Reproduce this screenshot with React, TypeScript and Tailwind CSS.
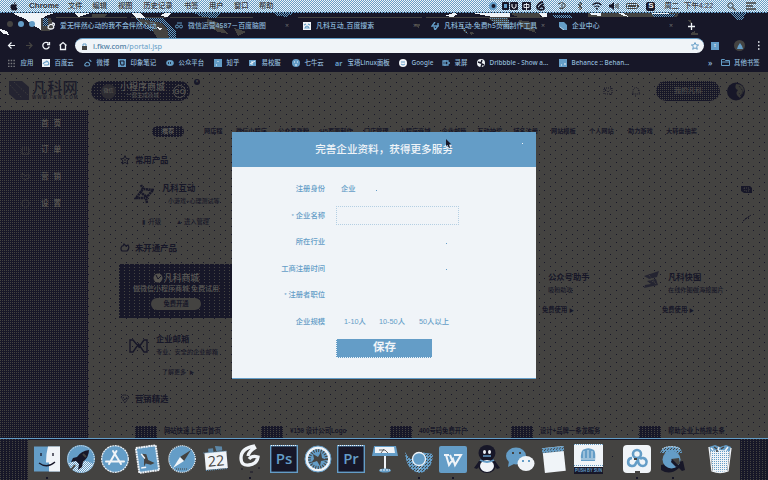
import React from "react";

const INK = "#171728";
const GRAY = "#444341";
const BLUE = "#649dc7";
const PALE = "#f0f4f8";

type Kids = { children?: React.ReactNode; className?: string };

const Glyph = ({ w = 8, h = 8, box = "0 0 8 8", children, className = "" }: Kids & { w?: number; h?: number; box?: string }) => (
  <svg width={w} height={h} viewBox={box} fill="none" className={"shrink-0 " + className}>
    {children}
  </svg>
);

/* ---------- macOS menu bar ---------- */

const menus: [string, string][] = [
  ["文件", "w-[24.5px]"],
  ["编辑", "w-[25.5px]"],
  ["视图", "w-[25.5px]"],
  ["历史记录", "w-[40.5px]"],
  ["书签", "w-[25px]"],
  ["用户", "w-[25px]"],
  ["窗口", "w-[25px]"],
  ["帮助", "w-[25px]"],
];

function MenuBar() {
  return (
    <div className="flex h-[12px] items-center whitespace-nowrap bg-[repeating-conic-gradient(#649dc7_0_25%,#f0f4f8_0_50%)] bg-[length:2px_2px] text-[7.3px] leading-[12px] text-[#3a3a3e]">
      <Glyph w={8} h={9} box="0 0 8 9" className="ml-[10px] mr-[11px]">
        <path d="M4 2.6C5 1.9 6.6 2 7.3 3.1 5.9 4 6.1 5.9 7.6 6.5 7 8 6 9 5 8.500 4.300 8.200 3.900 8.200 3.200 8.500 1.400 9.200-.8 4.600 1.200 2.800 2.200 2 3.200 2.300 4 2.600ZM3.900 2C3.900.9 4.600.2 5.500 0 5.600 1 4.900 2 3.900 2Z" fill={INK} />
      </Glyph>
      <span className="w-[39px] text-[8px] font-bold text-[#333339]">Chrome</span>
      {menus.map(([m, w]) => (
        <span key={m} className={w + " shrink-0 font-medium"}>{m}</span>
      ))}
      <div className="ml-auto flex items-center">
        <Glyph w={60} h={10} box="0 0 60 10" className="mr-[8px]">
          <circle cx="4" cy="5" r="4" fill={BLUE} />
          <circle cx="4.500" cy="5" r="2" fill={INK} />
          <rect x="13" y="1" width="7" height="8" rx="1" fill={INK} />
          <path d="M15 3h3v4h-3z" fill={BLUE} />
          <rect x="21" y="1" width="8" height="8" rx="1" fill={INK} />
          <path d="M23 3v3q2 3 4 0V3" stroke={PALE} />
          <rect x="33" y="1" width="9" height="8" rx="1" fill={INK} />
          <path d="M35 3.500h5v3h-5zM37.500 2v7" stroke={PALE} strokeWidth=".9" />
          <path d="M54 1c-3 0-6 3-6 5 0 3 7 4 7 1 0-2-4-2-5 0M51 5l4-2" stroke={INK} strokeWidth="1.800" />
        </Glyph>
        <Glyph w={11} h={10} box="0 0 11 10" className="mr-[9px]">
          <path d="M1 3q4-3 7 0v3q-3 3-6 1M5 3v4" stroke={GRAY} />
        </Glyph>
        <Glyph w={6} h={10} box="0 0 6 10" className="mr-[9px]">
          <path d="M1 3l4 4-2 2V1l2 2-4 4" stroke={GRAY} />
        </Glyph>
        <Glyph w={10} h={8} box="0 0 10 8" className="mr-[7px]">
          <path d="M.5 3q4.500-4 9 0M2.500 5q2.500-2 5 0" stroke={INK} strokeWidth="1.200" />
          <circle cx="5" cy="6.700" r="1" fill={INK} />
        </Glyph>
        <Glyph w={10} h={8} box="0 0 10 8" className="mr-[7px]">
          <path d="M0 2.500h2L5 0v8L2 5.500H0z" fill={INK} />
          <path d="M7 2v4M9 1v6" stroke={GRAY} />
        </Glyph>
        <Glyph w={13} h={8} box="0 0 13 8" className="mr-[7px]">
          <rect x=".5" y="1.500" width="11" height="5" rx="1" stroke={GRAY} />
          <path d="M2 3h8v2H2z" fill={GRAY} />
          <path d="M12.500 3v2" stroke={GRAY} />
        </Glyph>
        <span className="mr-[9px] flex size-[9px] items-center justify-center rounded-[2px] bg-[#171728] text-[8px] font-bold leading-none text-[#f0f4f8]">S</span>
        <span className="mr-[5px] font-medium">周二</span>
        <span className="w-[40px] font-medium tracking-[.1px]">下午4:22</span>
        <Glyph w={9} h={9} box="0 0 9 9" className="ml-[3px] mr-[9px]">
          <circle cx="3.500" cy="3.500" r="2.700" stroke={GRAY} />
          <path d="M5.500 5.500l3 3" stroke={GRAY} strokeWidth="1.300" />
        </Glyph>
        <Glyph w={11} h={8} box="0 0 11 8" className="mr-[12px]">
          <path d="M1 1h10M1 4h7M1 7h10" stroke={GRAY} strokeWidth="1.300" />
        </Glyph>
      </div>
    </div>
  );
}

/* ---------- browser chrome ---------- */

function TabArt() {
  return (
    <svg className="absolute inset-0" width="768" height="26" viewBox="0 12 768 26" shapeRendering="crispEdges">
      <defs>
        <pattern id="mix" width="2" height="2" patternUnits="userSpaceOnUse">
          <rect width="2" height="2" fill={INK} />
          <path d="M0 0h1v1H0zM1 1h1v1H1z" fill={BLUE} />
        </pattern>
        <pattern id="mixGray" width="2" height="2" patternUnits="userSpaceOnUse">
          <rect width="2" height="2" fill={GRAY} />
          <path d="M0 0h1v1H0z" fill={BLUE} />
        </pattern>
      </defs>
      <path d="M0 12.500h768" stroke={BLUE} strokeDasharray="2 1" />
      <path d="M14 13h40l-8 3-4 3-1 11-8-5-8-6-11-5z" fill={PALE} />
      <path d="M0 29l7 2 2 4-5-1-4-3z" fill={PALE} />
      <path d="M41 18h10l3 10-5 3h-8z" fill={GRAY} />
      <path d="M56 17.500h71M131 17.500h35M170 17.500h83M298 17.500h124M426 17.500h118" stroke={GRAY} strokeWidth="1.500" />
      <path d="M43 18h5v8h-5zM134 18h28l14 14v6h-14l-14-9z" fill="url(#mix)" />
      <path d="M136 18l26 5 5 6-10-1-14-4zM152 29h15l2 9h-12z" fill={GRAY} />
      <path d="M74 13h17l-13 4zM131 13h9l6 5h-9zM165 13h6l-3 4-8-1z" fill={PALE} />
      <path d="M92 14h15l-3 4H92z" fill={GRAY} />
      <path d="M193 13h28l-6 5-12-1zM274 13h19l-6 4-9-1z" fill="url(#mix)" />
      <path d="M207 19l12 4 9 11-10-2-11-7zM234 28l12 4-8 4z" fill={GRAY} />
      <path d="M155 26l8 3-4 1z" fill={PALE} />
      <path d="M453 13l5 1-5 3-8-1zM472 13h38v4h-18l-9-2z" fill={PALE} />
      <path d="M462 23l6 11-4-2-4-7zM488 18h20l4 12-16-6z" fill="url(#mixGray)" />
      <path d="M470 32l5 1-4 2zM519 20l13 2 4 11-9-3-8-5zM415 24h5l-1 5z" fill={GRAY} />
      <path d="M512 13h27l2 5h-20l-9-3zM588 13h91l-2 4H588z" fill={GRAY} />
      <path d="M538 13h9v4h-5zM589 13h12v3l-9-1zM618 13h5l6 4-5-1zM651 13h19l-5 4h-8z" fill={PALE} />
      <path d="M553 15h16l3 3h-18zM651 14h26l-4 3h-18zM731 13h16l-5 7h-6z" fill="url(#mix)" />
      <path d="M687 20l5 4-1-4zM691 33l4-2v2h3v2h-7z" fill={GRAY} />
    </svg>
  );
}

const tabs: { name: string; close: boolean; icon: React.ReactNode }[] = [
  { name: "爱无怦然心动的我不会怦然心动", close: false, icon: <path d="M1 5q2-4 5-2 2 4-2 4-3 0-3-2M5 1q3 0 3 3" stroke={PALE} strokeWidth="1.300" /> },
  { name: "微信运营4587－百度脑图", close: true, icon: <><circle cx="2" cy="4.500" r="1.500" stroke={BLUE} /><circle cx="6" cy="4.500" r="1.500" stroke={BLUE} /><path d="M2 1h5" stroke={BLUE} /></> },
  { name: "凡科互动_百度搜索", close: true, icon: <><path d="M0 0h8v8H0z" fill={PALE} /><path d="M1 3l2-1M5 2l2 1M2 6q2-4 4 0z" stroke={BLUE} strokeWidth="1.200" /></> },
  { name: "凡科互动-免费h5页面制作工具", close: true, icon: <path d="M4 0L1 4h6L4 8 3 5M7 1v4" stroke={BLUE} strokeWidth="1.400" /> },
  { name: "企业中心", close: true, icon: <><path d="M0 0h5l3 3v5H4L0 5z" fill={BLUE} /><path d="M1 5l4 3" stroke={PALE} strokeWidth=".6" /></> },
];

function TabStrip() {
  return (
    <div className="relative h-[26px] bg-[#171728]">
      <TabArt />
      <div className="relative flex h-[26px] items-center pt-[2px]">
        <div className="flex w-[42px] gap-[5px] pb-[5px] pl-[7px]">
          <i className="size-[6px] rounded-full bg-[#444341]" />
          <i className="size-[6px] rounded-full bg-[#649dc7]" />
          <i className="size-[6px] rounded-full bg-[#649dc7]" />
        </div>
        {tabs.map((t) => (
          <div key={t.name} className="flex w-[128px] items-center whitespace-nowrap pl-[5px] font-['Noto_Sans','Noto_Sans_CJK_SC',sans-serif] text-[6.900px] leading-[10px] text-[#8db9db]">
            <Glyph className="mr-[5px]">{t.icon}</Glyph>
            <span className="w-[97px] overflow-hidden font-medium">{t.name}</span>
            {t.close && <span className="text-[7px] text-[#6b6b6d]">×</span>}
          </div>
        ))}
        <Glyph className="ml-[6px]" w={7} h={7} box="0 0 7 7">
          <path d="M3.500 0v7M0 3.500h7" stroke={PALE} strokeWidth="1.300" />
        </Glyph>
      </div>
    </div>
  );
}

function Toolbar() {
  return (
    <div className="flex h-[15px] items-center bg-[#171728]">
      <Glyph w={75} h={14} box="0 0 75 14">
        <path d="M15 6.500H8.500M11.500 3.500l-3 3 3 3" stroke={PALE} strokeWidth="1.200" />
        <path d="M26 6.500h6M29 3.500l3 3-3 3" stroke={GRAY} strokeWidth="1.200" />
        <path d="M48.500 4.300A3.300 3.300 0 1 0 49.300 7.500M49.500 3v2.500H47" stroke={PALE} strokeWidth="1.300" />
        <path d="M59.500 6.500l3.500-3 3.500 3M60.500 6v4.500h5V6" stroke={PALE} strokeWidth="1.300" />
      </Glyph>
      <div className="flex h-[15px] w-[629px] items-center rounded-full border-t border-[#649dc7] bg-[#f0f4f8] pl-[7px] pr-[5px]">
        <Glyph w={5} h={7} box="0 0 5 7" className="mr-[6px]">
          <path d="M0 3h5v4H0z" fill={GRAY} />
          <path d="M1 3V1h3v2" stroke={BLUE} />
        </Glyph>
        <span className="font-['Noto_Sans',sans-serif] text-[7.400px] leading-[12px] text-[#649dc7]"><b className="font-medium text-[#5080a5]">i.fkw.com</b>/portal.jsp</span>
        <Glyph className="ml-auto">
          <path d="M4 .5l1 2.300 2.600.2-2 1.700.7 2.600L4 5.900 1.700 7.300l.7-2.600-2-1.700 2.600-.2z" stroke={BLUE} />
        </Glyph>
      </div>
      <div className="ml-[7px] flex size-[8px] items-center justify-center bg-[#649dc7] text-[5px] text-[#f0f4f8]">ɪ</div>
      <div className="ml-[15px] flex size-[11px] items-center justify-center rounded-full bg-[#444341]">
        <Glyph w={6} h={6} box="0 0 6 6"><path d="M3 0l2 3 1 3H0l1-3z" fill={BLUE} /></Glyph>
      </div>
      <Glyph w={3} h={9} box="0 0 3 9" className="-ml-px ml-[12px]"><path d="M1 1h1.500M1 4.500h1.500M1 8h1.500" stroke={PALE} strokeWidth="1.500" /></Glyph>
    </div>
  );
}

const square = <path d="M0 0h8v8H0z" fill={BLUE} />;
const marks: [string, string, React.ReactNode][] = [
  ["应用", "w-[34px]", <path key="a" d="M0 1.500h7M0 4.500h7M0 7.500h7" stroke="#76777b" strokeWidth="1.500" strokeDasharray="1.500 1.200" />],
  ["百度云", "w-[42px]", <g key="b"><path d="M0 0h8.500v8H0z" fill={PALE} /><path d="M1 5q1-2 3-2 0-2 2 0 2 3-1 3H2" stroke={BLUE} strokeWidth="1.200" /></g>],
  ["微博", "w-[34px]", <path key="c" d="M1 5q2-3 4-1 2 3-2 3-3 0-2-2M5 1q2 0 2 2" stroke={BLUE} strokeWidth="1.100" />],
  ["印象笔记", "w-[48px]", <g key="d">{square}<path d="M2 2h4v4H3z" stroke={INK} /></g>],
  ["公众平台", "w-[48px]", <g key="e"><ellipse cx="4" cy="4" rx="3.800" ry="3" fill={BLUE} /><path d="M2 4h4" stroke={INK} strokeWidth="1.500" strokeDasharray="1 1" /></g>],
  ["知乎", "w-[35px]", <g key="f">{square}<path d="M4 2v1M2 6h1" stroke={PALE} /></g>],
  ["易校服", "w-[43px]", <g key="g"><path d="M0 1h7v6H0z" fill={BLUE} /><path d="M1 5l5-3M3 2v4" stroke={PALE} /></g>],
  ["七牛云", "w-[43px]", <g key="h"><circle cx="4" cy="4" r="4" fill={BLUE} /><path d="M2 3h1M5 3h1M3 6h2" stroke={PALE} /></g>],
  ["宝塔Linux面板", "w-[64px]", <text key="i" x="0" y="6.500" fontSize="7" fontWeight="bold" fill={BLUE}>ar</text>],
  ["Google", "w-[43px]", <g key="j"><circle cx="4" cy="4" r="4" fill={PALE} /><path d="M2 3h4M2 5q2 2 4 0" stroke={BLUE} /></g>],
  ["录屏", "w-[35px]", <path key="k" d="M1 2h5v4H1zM3 1v6M6 4h2" stroke={BLUE} strokeWidth="1.300" />],
  ["Dribbble - Show a...", "w-[82px]", <g key="l"><circle cx="4" cy="4" r="4" fill={PALE} /><path d="M1 3l3 1 1-3M4 8l1-3 2 1" stroke={INK} strokeWidth="1.400" /></g>],
  ["Behance :: Behan...", "w-[149px]", <g key="m">{square}<path d="M5 5h2M2 6h1" stroke={PALE} /></g>],
];

function Bookmarks() {
  return (
    <div className="flex h-[19px] items-center whitespace-nowrap bg-[#171728] pl-[8px] font-['Noto_Sans','Noto_Sans_CJK_SC',sans-serif] text-[6.400px] font-medium leading-[10px] text-[#93bcdc]">
      {marks.map(([name, w, icon]) => (
        <div key={name} className={"flex shrink-0 items-center gap-[4.500px] " + w}>
          <Glyph>{icon}</Glyph>
          <span>{name}</span>
        </div>
      ))}
      <span className="w-[13px] text-[8px]">»</span>
      <Glyph w={9} h={7} box="0 0 9 7" className="mr-[4px]"><path d="M.5 6.500v-6h3l1 1h4v5zM1 3h7" stroke={BLUE} /></Glyph>
      <span>其他书签</span>
    </div>
  );
}

/* ---------- dimmed page behind the dialog ---------- */

function SiteHeader() {
  return (
    <div className="flex h-[38px] items-start pl-[9px] pt-[9px]">
      <Glyph w={20} h={19} box="0 0 20 19" className="mr-[3px]">
        <path d="M0 0h13l7 6v13H7l-7-6z" fill="#242431" />
        <path d="M1 4l12 13M5 1l14 13" stroke={GRAY} strokeDasharray="1 1.500" />
      </Glyph>
      <div className="w-[59px]">
        <div className="h-[14px] text-[15.200px] font-medium leading-[13px] text-[#1d1d2b]">凡科网</div>
        <div className="whitespace-nowrap text-[4.500px] font-bold leading-[5px] tracking-[1px] text-[#20202c]">WWW.FKW.COM</div>
      </div>
      <div className="flex h-[20px] w-[99px] items-center rounded-full bg-[#171728] bg-[conic-gradient(at_1px_1px,transparent_75%,#444341_0)] bg-[length:3px_3px] pl-[10px] pr-[4px]">
        <div className="flex size-[15px] items-center justify-center rounded-full bg-[#2d2c32] text-[5px] text-[#66645f]">微信</div>
        <div className="ml-[4px] text-center leading-[7px] text-[#5a5955]">
          <div className="text-[9px] font-medium leading-[9px]">小程序商城</div>
          <div className="text-[5.500px] leading-[7px]">一键生成商城</div>
        </div>
        <div className="ml-auto flex size-[13px] items-center justify-center rounded-full border border-[#55534f] text-[7px] font-bold leading-none text-[#55534f]">GO</div>
      </div>
      <div className="-mt-[2px] ml-[4px] size-[6px] rounded-full bg-[#171728] text-center text-[5px] leading-[5px] text-[#5a5955]">×</div>
      <div className="ml-auto flex items-center">
        <Glyph w={10} h={10} box="0 0 10 10" className="mr-[17px]"><path d="M1 2h8v6H1zM1 2l4 4 4-4" stroke={INK} strokeDasharray="1 1" /></Glyph>
        <Glyph w={12} h={12} box="0 0 12 12" className="mr-[14px]"><path d="M2 9q1-1 1-4 3-5 6 0 0 3 1 4zM5 11h2" stroke={INK} strokeDasharray="1 1" /></Glyph>
        <div className="flex h-[20px] w-[64px] items-center justify-center rounded-full bg-[#171728] bg-[conic-gradient(at_1px_1px,transparent_75%,#444341_0)] bg-[length:2px_2px] text-[7px] font-medium text-[#4b4a48]">我的凡科</div>
        <Glyph w={18} h={19} box="0 0 18 19" className="ml-[7px] mr-[23px]">
          <circle cx="9" cy="9.500" r="9" fill={INK} />
          <path d="M9 2q8 0 8 7l-4 7q-6-4-2-8-4-1-2-6" fill="#393937" />
          <path d="M12 4l4 5-2 5-2-3" stroke={INK} strokeDasharray="1 1" />
        </Glyph>
      </div>
    </div>
  );
}

const side: [string, React.ReactNode][] = [
  ["首 页", null],
  ["订 单", <path key="1" d="M1 2h7v6H1zM3 4h4" stroke="#4b4945" strokeDasharray="1 1" />],
  ["营 销", <path key="2" d="M1 1l3 3 4-2v4L4 8 1 6z" stroke="#4b4945" strokeDasharray="1 1" />],
  ["设 置", <circle key="3" cx="4.500" cy="4.500" r="3.500" stroke="#4b4945" strokeDasharray="1 1" />],
];

function Sidebar() {
  return (
    <div className="w-[88px] shrink-0 bg-[#171728] bg-[conic-gradient(at_1px_1px,transparent_75%,#444341_0)] bg-[length:2px_2px]">
      {side.map(([name, icon]) => (
        <div key={name} className="flex h-[26.700px] items-center pl-[21px] text-[7.500px] font-medium text-[#5c5b56]">
          <Glyph w={9} h={9} box="0 0 9 9" className="mr-[11px]">{icon}</Glyph>
          <span className="tracking-[1.400px]">{name}</span>
        </div>
      ))}
    </div>
  );
}

const Heading = ({ icon, children, className = "" }: Kids & { icon: React.ReactNode }) => (
  <div className={"flex h-[16px] items-center text-[8.400px] font-bold leading-[16px] " + className}>
    <Glyph w={10} h={10} box="0 0 10 10" className="ml-[32px] mr-[5px]">{icon}</Glyph>
    {children}
  </div>
);

const navHidden = ["微信小程序", "公众号涨粉", "H5页面制作", "门店管理", "小程序商城", "企业邮箱", "互动抽奖", "域名注册"];

function Nav() {
  return (
    <div className="flex h-[42px] items-center whitespace-nowrap text-[6.200px] font-bold">
      <div className="ml-[64px] flex h-[11px] w-[32px] items-center justify-center rounded-full bg-[#171728] bg-[conic-gradient(at_1px_1px,transparent_75%,#444341_0)] bg-[length:3px_2px] text-[6px] text-[#5c5b57]">推荐</div>
      <span className="ml-[20px] w-[32px]">网店程</span>
      <div className="flex w-[302px] justify-between">{navHidden.map((n) => <span key={n}>{n}</span>)}</div>
      <span className="ml-[13px] w-[38px]">网站模板</span>
      <span className="w-[39px]">个人网站</span>
      <span className="w-[38px]">助力游戏</span>
      <span>大转盘抽奖</span>
    </div>
  );
}

const offers: [string, string][] = [
  ["网站快速上百度首页", "w-[126px]"],
  ["¥150 设计公司Logo", "w-[129px]"],
  ["400号码免费开户", "w-[121px]"],
  ["设计+品牌一条龙服务", "w-[128px]"],
  ["帮助企业上热搜头条", "w-[100px]"],
];

const ProductCard = ({ title, desc, width }: { title: string; desc: string; width: string }) => (
  <div className={"whitespace-nowrap pt-[14px] " + width}>
    <div className="text-[8.300px] font-bold leading-[14px]">{title}</div>
    <div className="mt-[1px] text-[6.200px] font-medium leading-[10px] opacity-90">{desc}</div>
    <div className="-ml-[6px] mt-[10px] text-[6.300px] font-bold leading-[10px]">免费使用 <span className="text-[5px]">▶</span></div>
  </div>
);

function PageMain() {
  return (
    <div className="min-w-0 flex-1 text-[#171728]">
      <Nav />
      <Heading icon={<><path d="M5 .7l1.300 2.800 3 .3-2.200 2 .7 3.200L5 7.400 2.200 9l.7-3.200-2.200-2 3-.3z" stroke={INK} /><path d="M4 5h2" stroke={INK} /></>}>常用产品</Heading>
      <div className="flex h-[72px] justify-between">
        <div className="w-[144px] whitespace-nowrap pl-[46px] pt-[13px]">
          <div className="flex">
            <Glyph w={20} h={20} box="0 0 20 20" className="mt-[3px]">
              <path d="M7 1l2 4-7 9h9M13 19l-1-5 7-8-9-1M6 8l7 5" stroke={INK} strokeWidth="2.500" strokeDasharray="2 .6" />
            </Glyph>
            <div className="ml-[8px]">
              <div className="text-[8.300px] font-bold leading-[14px]">凡科互动</div>
              <div className="ml-[6px] text-[6px] font-medium leading-[12px] opacity-90">小游戏+心理测试等</div>
            </div>
          </div>
          <div className="mt-[9px] flex text-[6.300px] font-medium leading-[12px] opacity-90">
            <span className="ml-[8px] w-[34px]">▮&nbsp; 升级</span>
            <span>▲ 进入管理</span>
          </div>
        </div>
        <div className="flex w-[27px] flex-col gap-[20px] pt-[17px]">
          <Glyph w={11} h={9} box="0 0 11 9"><path d="M0 1h9l2 2v5H3L0 6z" fill={INK} /><path d="M3 3h5v3H4z" stroke={GRAY} strokeDasharray="1 1" /></Glyph>
          <Glyph w={9} h={8} box="0 0 9 8" className="ml-[2px]"><path d="M0 7l8-6M2 5l5-3" stroke={INK} strokeDasharray="2 1" /></Glyph>
        </div>
      </div>
      <Heading icon={<path d="M2 3q-2 3 0 5h5q3-3 1-6L6 3 4 1 3 3z" stroke={INK} strokeWidth="1.200" />}>未开通产品</Heading>
      <div className="flex h-[134px] justify-between">
        <div className="w-[145px] pt-[8px]">
          <div className="ml-[31px] flex h-[54px] w-[114px] flex-col items-center whitespace-nowrap bg-[#171728] bg-[conic-gradient(at_1px_1px,transparent_75%,#444341_0)] bg-[length:5px_3px] pt-[8px] text-[#5a5955]">
            <div className="flex items-center text-[8.800px] font-medium leading-[12px]">
              <Glyph w={10} h={10} box="0 0 10 10" className="mr-[1px]"><circle cx="5" cy="5" r="4.500" fill="#55534f" /><path d="M3 2l2 4 3-3" stroke={INK} /></Glyph>
              凡科商城
            </div>
            <div className="text-[7px] font-medium leading-[9px]">做微信小程序商城 免费试用</div>
            <div className="mt-[5px] flex h-[12px] w-[50px] items-center justify-center rounded-full bg-[#444341] text-[6.300px] font-bold leading-[10px] text-[#171728]">免费开通</div>
          </div>
          <div className="flex whitespace-nowrap pl-[41px] pt-[14px]">
            <Glyph w={19} h={14} box="0 0 19 14" className="mt-[7px]">
              <path d="M1 1h3l6 7 5-7h3v12h-3L9.500 5 4 13H1z" stroke={INK} strokeWidth="1.400" />
            </Glyph>
            <div className="ml-[8px]">
              <div className="text-[8.300px] font-bold leading-[14px]">企业邮箱</div>
              <div className="text-[6.200px] font-medium leading-[12px] opacity-90">专业、安全的企业邮箱</div>
              <div className="ml-[6px] mt-[8px] text-[6px] font-medium leading-[12px] opacity-90">了解更多 &nbsp;<span className="text-[5px]">▶</span></div>
            </div>
          </div>
        </div>
        <div className="flex pr-[1px]">
          <Glyph w={14} h={22} box="0 0 14 22" className="mt-[14px]"><path d="M4 5l7 2v8l-8-1" fill={INK} /></Glyph>
          <ProductCard title="公众号助手" desc="吸粉助攻" width="w-[90px] ml-[9px]" />
          <Glyph w={18} h={20} box="0 0 18 20" className="ml-[4px] mr-[8px] mt-[14px]">
            <path d="M2 6L17 1l-2 6-8 2zM2 18l14-3-2-6-9 2 4 3-6 1z" fill="#242431" />
            <path d="M5 8l8 5M7 5l7 9" stroke={GRAY} strokeDasharray="1 1" />
          </Glyph>
          <ProductCard title="凡科快图" desc="在线作图做海报图片" width="w-[99px]" />
        </div>
      </div>
      <Heading className="mt-[1px]" icon={<path d="M1 3l2-2h4l2 2-4 6zM3 3l2 3 2-3" stroke={INK} strokeDasharray="1.500 .6" />}>营销精选</Heading>
      <div className="mt-[18px] flex whitespace-nowrap pl-[47px]">
        {offers.map(([name, w]) => (
          <div key={name} className={"flex shrink-0 " + w}>
            <div className="mt-[1px] h-[12px] w-[22px] bg-[#171728] bg-[conic-gradient(at_1px_1px,transparent_75%,#444341_0)] bg-[length:3px_2px]" />
            <span className="ml-[7px] text-[6.300px] font-bold leading-[11px]">{name}</span>
          </div>
        ))}
      </div>
    </div>
  );
}

/* ---------- company profile dialog ---------- */

const Field = ({ label, required, children }: Kids & { label: string; required?: boolean }) => (
  <div className="flex h-[26.500px] items-center whitespace-nowrap text-[7.300px]">
    <div className="w-[93px] text-right">{required && <span className="mr-[2px] text-[6px]">*</span>}{label}</div>
    {children}
  </div>
);

function ProfileDialog() {
  return (
    <div className="absolute left-[232px] top-[132px] h-[247px] w-[304px] border-b border-[#649dc7] bg-[#f0f4f8] text-[#649dc7]">
      <div className="flex h-[35px] items-center justify-center whitespace-nowrap bg-[#649dc7] text-[10.600px] font-medium text-[#f0f4f8]">完善企业资料，获得更多服务</div>
      <div className="pt-[9.500px] font-medium">
        <Field label="注册身份"><span className="ml-[16px]">企业</span></Field>
        <Field label="企业名称" required><div className="-mt-[2px] ml-[11px] h-[19px] w-[123px] border border-dotted border-[#b4cfe3]" /></Field>
        <Field label="所在行业" />
        <Field label="工商注册时间" />
        <Field label="注册者职位" required />
        <Field label="企业规模">
          <span className="ml-[19px] w-[35px]">1-10人</span>
          <span className="w-[40px]">10-50人</span>
          <span>50人以上</span>
        </Field>
      </div>
      <div className="ml-[104px] mt-[3.500px] flex h-[19px] w-[96px] items-center justify-center border-b border-l border-dotted border-[#f0f4f8] bg-[#649dc7] text-[11.500px] font-bold leading-none text-[#f0f4f8]">保存</div>
      <svg className="absolute left-[213px] top-[7px]" width="7" height="10" viewBox="0 0 7 10"><path d="M1 0l5 5-2 .5 1 3-1 .5-1.500-3L1 7z" fill={INK} /></svg>
      <i className="absolute left-[290px] top-[11px] size-px bg-[#f0f4f8]" />
      <i className="absolute left-[144px] top-[58px] size-px bg-[#649dc7]" />
      <i className="absolute left-[214px] top-[111px] size-px bg-[#649dc7]" />
      <i className="absolute left-[214px] top-[137px] size-px bg-[#649dc7]" />
    </div>
  );
}

/* ---------- dock ---------- */

const adobe = (label: string) => (
  <>
    <rect x=".7" y=".7" width="26.600" height="26.600" fill={INK} stroke={BLUE} strokeWidth="1.400" />
    <path d="M1 .5h26" stroke={PALE} strokeDasharray="1 1" />
    <text x="14" y="19" textAnchor="middle" fontSize="15" fontWeight="600" fontFamily="Open Sans, sans-serif" fill={BLUE}>{label}</text>
  </>
);

const dock: React.ReactNode[] = [
  <><rect x="1" y="1.500" width="26" height="25" fill={BLUE} /><path d="M15 1.500h12v25H16v-9h-3q0-9 2-16z" fill={PALE} /><path d="M8 8v3M20 8v3M6 18q8 6 16-1" stroke={INK} strokeWidth="1.300" /></>,
  <><circle cx="14" cy="14" r="14" fill={BLUE} /><circle cx="14" cy="14" r="13.300" stroke={PALE} strokeDasharray="1 1" /><path d="M2 18q12-6 24 1-3 8-12 8-9 0-12-9z" fill="url(#dots)" /><path d="M22 5q-8 1-12 7l-4 1-2 4 5-1 3 3-1 6 4-3 1-5q6-5 6-12z" fill={INK} /><path d="M16 9l3 3M8 20l-4 5" stroke={GRAY} strokeWidth="2" /></>,
  <><circle cx="14" cy="14" r="13.300" fill={BLUE} stroke={PALE} strokeWidth="1.200" strokeDasharray="2 .7" /><path d="M12 6l8 13M15.500 6L8 19M5 16.500h18" stroke={PALE} strokeWidth="2" strokeLinecap="round" /></>,
  <g transform="rotate(-8 14 14)"><rect x="3.500" y="1.500" width="20" height="25" fill={BLUE} stroke={PALE} strokeWidth="2" strokeDasharray="2 .5" /><path d="M9 8l4 1 1 6 6 4-4 1-5-2-2 3 1-7z" fill={GRAY} /><path d="M8 8l3 5M6 22h5" stroke={PALE} strokeWidth="1.500" /></g>,
  <><circle cx="14" cy="14" r="13.300" fill={BLUE} stroke={PALE} strokeWidth="1.200" strokeDasharray="1 1" /><path d="M23 5l-7 11-4-4z" fill={GRAY} /><path d="M5 23l7-11 4 4z" fill={PALE} /><path d="M8 24h11" stroke={GRAY} strokeDasharray="1 1" /></>,
  <><g transform="rotate(-5 14 14)"><path d="M7 3h5v4H7zM14 1l7 1v4h-6z" fill="#5c87a7" /><rect x="3" y="7" width="22" height="17" fill={PALE} /><path d="M2 7h24M3 24.500h22" stroke={BLUE} strokeDasharray="1 1" /><text x="14" y="21" textAnchor="middle" fontSize="14.500" fontFamily="Open Sans, sans-serif" fill={GRAY}>22</text></g></>,
  <><path d="M19 1Q5 3 5 13q0 8 8 7 8-1 9-8-6-2-9 2M20 2q-7 4-8 9" stroke={PALE} strokeWidth="3.300" /><path d="M5 24h2M14 27h3M22 23h2" stroke={INK} /></>,
  adobe("Ps"),
  <><circle cx="14" cy="14" r="13" fill={PALE} stroke={BLUE} /><circle cx="14" cy="14" r="10" fill={BLUE} /><circle cx="14" cy="14" r="8.500" stroke={GRAY} strokeWidth="3" strokeDasharray="1 1.500" /><path d="M9 9l5 3 3-5 1 6 5 2-6 1-1 5-3-5-6 2 3-4z" fill={GRAY} /></>,
  adobe("Pr"),
  <><path d="M3 1h22l2 10H1z" fill={BLUE} /><path d="M4 2h19l1 6H4z" fill={PALE} /><path d="M14 11v14" stroke={PALE} strokeWidth="2" /><ellipse cx="14" cy="25.500" rx="6" ry="2" fill={BLUE} /><path d="M9 25h10" stroke={PALE} strokeDasharray="2 1" /><path d="M8 5h6l3 3M10 8l3-4" stroke={GRAY} strokeWidth=".8" /></>,
  <><path d="M0 7q4 7 7 7 1-7 8-7l13 2q-1 17-13 19Q1 26 0 7z" fill="url(#blueDots)" /><circle cx="14" cy="14" r="6.500" fill={BLUE} stroke={PALE} strokeWidth="1.300" /><path d="M20 17l-8 10" stroke={PALE} strokeDasharray="1 1" /></>,
  <><rect x="0" y="1" width="28" height="27" rx="2" fill={BLUE} /><path d="M5 10h5M7 10l3 10 4-6 2 6 6-10h-7M11 10l3 7" stroke={PALE} strokeWidth="2" /></>,
  <><ellipse cx="14" cy="8" rx="8.500" ry="8" fill={INK} /><ellipse cx="14" cy="20" rx="9" ry="8" fill={INK} /><path d="M6 16l-5 7 3 1 4-5M22 16l5 7-3 1-4-5" fill={INK} /><ellipse cx="14" cy="21" rx="7" ry="6" fill={PALE} /><path d="M7 15q7 4 14 0" stroke={BLUE} strokeWidth="2" /><ellipse cx="11.500" cy="7" rx="1.500" ry="2" fill={PALE} /><ellipse cx="16.500" cy="7" rx="1.500" ry="2" fill={PALE} /><path d="M10 11h8" stroke={BLUE} strokeWidth="1.500" /></>,
  <><ellipse cx="10" cy="11" rx="10" ry="8.500" fill={BLUE} /><path d="M3 16l-1 6 6-3z" fill={BLUE} /><ellipse cx="20" cy="18.500" rx="8.500" ry="7.500" fill={PALE} /><path d="M6 8h2M13 8h2" stroke={GRAY} strokeWidth="2" /><path d="M16 16h2M22 16h2" stroke={BLUE} strokeWidth="2" /></>,
  <g transform="rotate(-6 14 14)"><rect x="3.500" y="2" width="21" height="25" fill={PALE} /><path d="M3 2h22v5H3z" fill="url(#blueDots)" /></g>,
  <><rect x="0" y="-1" width="29" height="23" fill={PALE} /><path d="M0-.5h29M0 20.500h29" stroke={BLUE} strokeDasharray="1 1" /><path d="M7 16q-1-12 4-12 4-2 9 1 2 3 1 11z" fill={BLUE} /><path d="M10 6v7M14 5v8M18 6v7M7 14h14" stroke={PALE} strokeWidth=".8" /><path d="M0 22h29v7H0z" fill={INK} /><text x="14.500" y="27.300" textAnchor="middle" fontSize="5" fontWeight="bold" textLength="27" lengthAdjust="spacingAndGlyphs" fill={BLUE}>PUSH BY SUN</text></>,
];

const dockTail: React.ReactNode[] = [
  <><rect x="0" y="0" width="28" height="28" rx="4" fill={PALE} /><path d="M14 5a4 4 0 0 1 0 8 4 4 0 0 1 0-8M9 13a4 4 0 1 0 4 5l2-3q0 6 5 6a4 4 0 1 0-3-7" stroke={BLUE} strokeWidth="2.600" /><path d="M11 14h3M12 27h5" stroke={GRAY} strokeWidth="2" /></>,
  <><path d="M1 8q3-8 12-7 9-1 10 7" fill="url(#blueDots)" /><path d="M2 20l22-4 2 9-3 1-3-3q-9 8-18 2z" fill={INK} /><circle cx="12.500" cy="14.500" r="9" fill={BLUE} /><path d="M12 14l8-1 1 5-3 3z" fill={GRAY} /><path d="M13 14l7 7-3 1-5-5z" fill={INK} /><path d="M3 4q9-5 18 0" stroke={PALE} strokeDasharray="1 1" /></>,
  <><path d="M4 4l20 1-3 22H7z" fill="url(#paleDots)" /><path d="M3 2l6-2 5 2 6-2 5 2-1 4-10-1L4 6z" fill={BLUE} /><path d="M3 2l3 24q8 3 16 0l3-23" stroke={PALE} strokeWidth="1.300" /><path d="M8 2l3 2M15 4l3-2M10 6h2" stroke={GRAY} strokeWidth="1.500" /><path d="M5 3l2 2M13 2l-1 3M22 2l-3 4" stroke={PALE} strokeWidth="1.500" /></>,
];

const Icon = ({ children }: Kids) => (
  <svg width="28" height="28" viewBox="0 0 28 28" fill="none" className="shrink-0 overflow-visible">{children}</svg>
);

function Dock() {
  return (
    <div className="absolute left-0 top-[438px] h-[42px] w-[768px] border-t border-[#649dc7] bg-[#171728] bg-[conic-gradient(at_1px_1px,transparent_75%,#444341_0)] bg-[length:3px_2px]">
      <svg width="0" height="0" className="absolute">
        <defs>
          <pattern id="dots" width="2" height="2" patternUnits="userSpaceOnUse"><path d="M0 0h1v1H0zM1 1h1v1H1z" fill={PALE} /></pattern>
          <pattern id="blueDots" width="3" height="3" patternUnits="userSpaceOnUse"><rect width="3" height="3" fill={BLUE} /><path d="M0 0h1v1H0zM2 1h1v1H2z" fill={GRAY} /></pattern>
          <pattern id="paleDots" width="2" height="2" patternUnits="userSpaceOnUse"><rect width="2" height="2" fill={PALE} /><path d="M0 0h1v1H0z" fill={BLUE} /></pattern>
        </defs>
      </svg>
      <div className="ml-[28px] flex h-[41px] w-[712px] border-t border-[#171728] bg-[#444341] pl-[5px] pt-[5px]">
        <div className="flex gap-[5.820px]">
          {dock.map((d, i) => (
            <div key={i} className="flex w-[28px] flex-col items-center">
              <Icon>{d}</Icon>
              {[0, 6, 11, 12].includes(i) && <i className="mt-[4px] size-[2px] shrink-0 bg-[#171728]" />}
            </div>
          ))}
        </div>
        <i className="ml-[10px] mt-[11px] size-px bg-[#171728]" />
        <div className="ml-[10px] flex gap-[8px]">
          {dockTail.map((d, i) => (
            <div key={i} className={"flex w-[28px] flex-col items-center " + (i === 2 ? "ml-[11px]" : "")}>
              <Icon>{d}</Icon>
              {i < 2 && <i className="mt-[4px] size-[2px] shrink-0 bg-[#171728]" />}
            </div>
          ))}
        </div>
      </div>
    </div>
  );
}

export default function App() {
  return (
    <div className="relative flex h-[480px] w-[768px] flex-col overflow-hidden bg-[#444341] font-['Liberation_Sans','Noto_Sans_CJK_SC',sans-serif]">
      <MenuBar />
      <TabStrip />
      <Toolbar />
      <Bookmarks />
      <div className="flex h-[366px] flex-col bg-[conic-gradient(at_1px_1px,transparent_75%,#171728_0),conic-gradient(at_1px_1px,transparent_75%,#171728_0)] bg-[length:11px_8px,11px_8px] bg-[position:0_2px,5px_6px] text-[#171728]">
        <SiteHeader />
        <div className="flex min-h-0 flex-1">
          <Sidebar />
          <PageMain />
        </div>
      </div>
      <ProfileDialog />
      <Dock />
    </div>
  );
}
